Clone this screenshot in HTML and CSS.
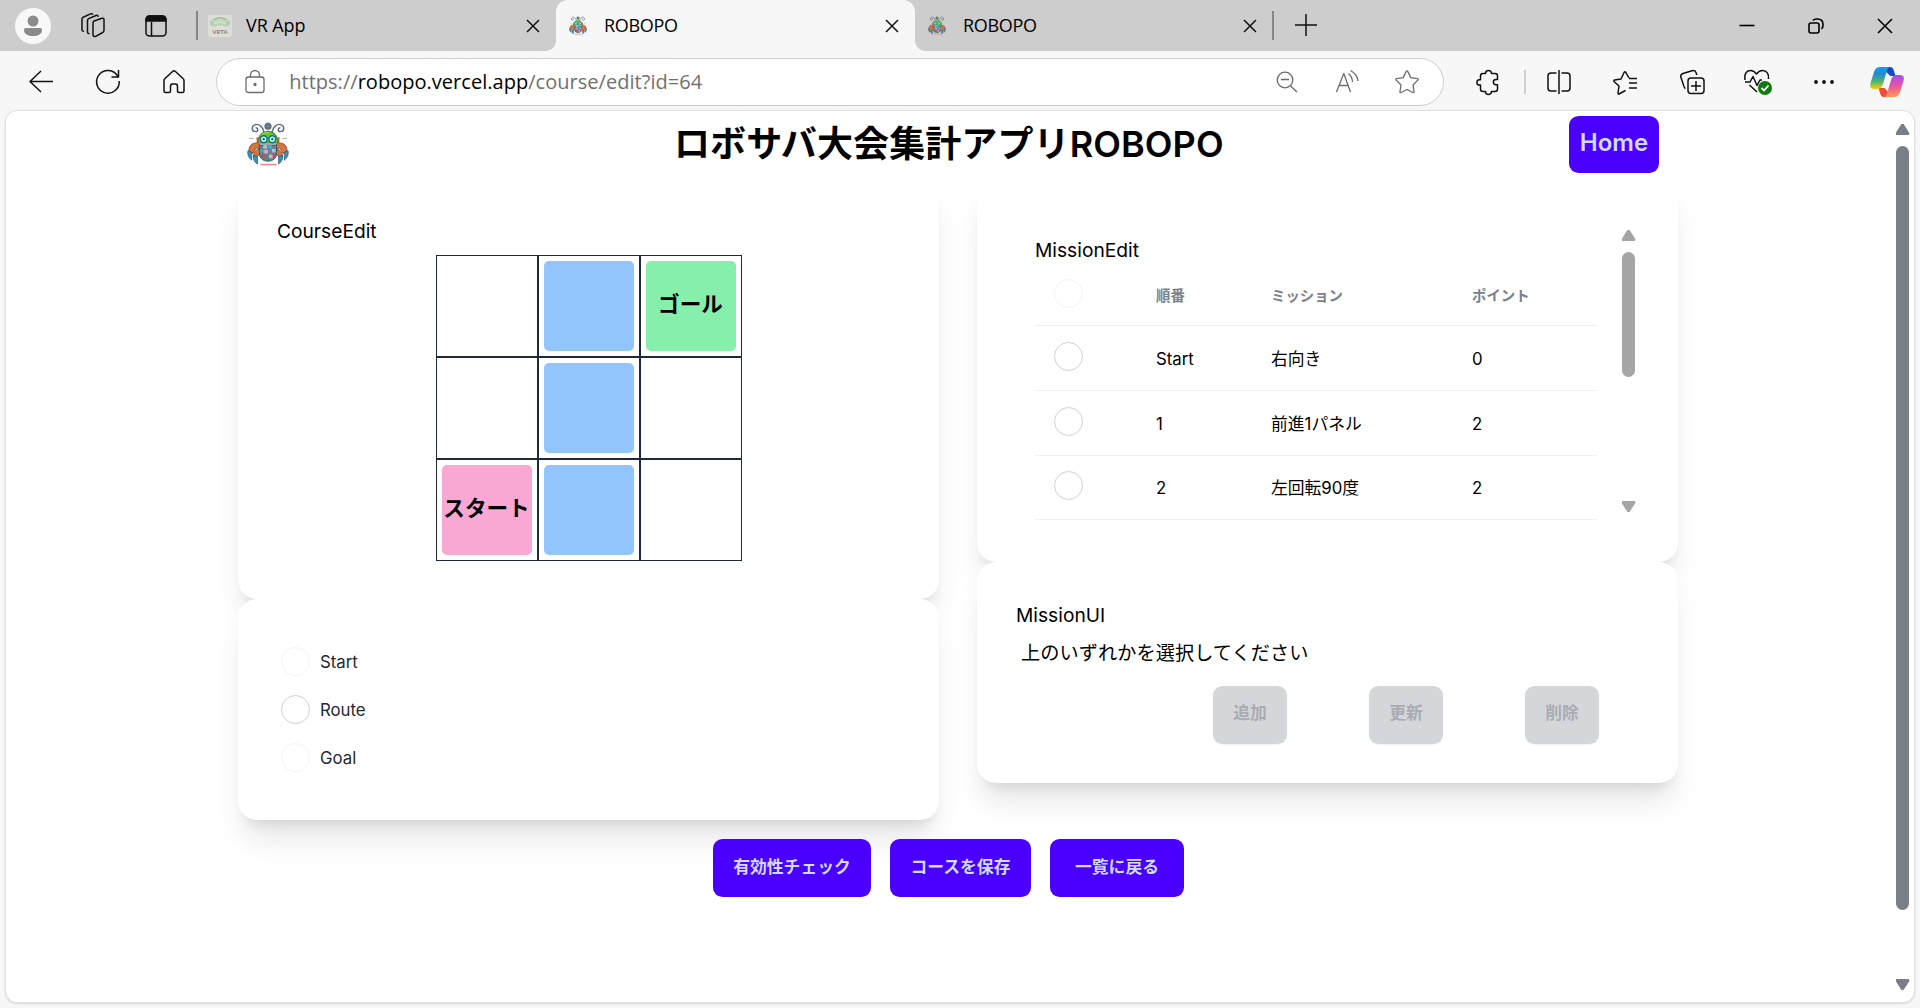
FILE: index.html
```html
<!DOCTYPE html>
<html lang="ja">
<head>
<meta charset="utf-8">
<title>ROBOPO</title>
<link rel="stylesheet" href="styles.css">
</head>
<body>
<svg class="defs" aria-hidden="true">
  <defs>
    <symbol id="close" viewBox="0 0 16 16"><path d="M2 2l12 12M14 2L2 14" fill="none" stroke="#111" stroke-width="1.5"/></symbol>
    <symbol id="robot" viewBox="0 0 44 46">
      <g fill="none" stroke="#5a6b80" stroke-width="1.5">
        <path d="M18 11C17 5 12 1 8 3c-4 2-3 7 1 7 3 0 3-4 0-4M26 11c1-6 6-10 10-8 4 2 3 7-1 7-3 0-3-4 0-4"/>
        <path d="M2 17h5M37 17h5" stroke="#b9c2cc" stroke-width="1.3"/>
      </g>
      <circle cx="22" cy="4.500" r="3.700" fill="#56667c"/><path d="M22 0v11M18 4.500h8" stroke="#8795a8" stroke-width=".8"/>
      <g fill="#d9733a" stroke="#6b4a3c" stroke-width=".8">
        <path d="M13 23C7 20 2 24 2 30l4 3 4-6 4 2zM31 23c6-3 11 1 11 7l-4 3-4-6-4 2z"/>
        <path d="M13 28c-4 1-7 5-6 9l4-1 4-5zM31 28c4 1 7 5 6 9l-4-1-4-5z"/>
      </g>
      <g fill="#3591b8" stroke="#355069" stroke-width=".7">
        <path d="M1 30l4 2 0 8C2 38 0 34 1 30zM43 30l-4 2 0 8c3-2 5-6 4-10zM7 35l4 1 0 8c-3-2-5-5-4-9zM37 35l-4 1 0 8c3-2 5-5 4-9z"/>
      </g>
      <path d="M13 24h18v9c0 5-4 8-9 8s-9-3-9-8z" fill="#62818d" stroke="#405464"/>
      <path d="M17 24h4v4h-4zM26 28h4v4h-4z" fill="#a9bfd0"/><path d="M22 24h4v4h-4zM14 29h4v3h-4z" fill="#49a9d0"/>
      <path d="M18 29h4v4h-4zM23 34h4v4h-4z" fill="#e6a4b6"/><path d="M15 34h4v3h-4zM27 33h3v4h-3z" fill="#c04e62"/><path d="M19 37h4v3h-4z" fill="#3e9a55"/>
      <path d="M12 22c-1-8 4-12 10-12s11 4 10 12z" fill="#60c72c" stroke="#39713a"/>
      <path d="M15 14c2-3 5-3 8-3" stroke="#a9ec62" fill="none"/>
      <path d="M11 16v6M33 16v6" stroke="#bc6538" stroke-width="2"/>
      <circle cx="17.500" cy="18" r="3.600" fill="#b5f3f1" stroke="#146f80" stroke-width="1.500"/><circle cx="26.500" cy="18" r="3.600" fill="#b5f3f1" stroke="#146f80" stroke-width="1.500"/>
      <circle cx="17.500" cy="18" r="1.200" fill="#16616f"/><circle cx="26.500" cy="18" r="1.200" fill="#16616f"/>
      <path d="M14 44.500h17" stroke="#f2848f" stroke-width="1.600"/>
    </symbol>
  </defs>
</svg>

<header class="tabstrip">
  <div class="strip-tools">
    <svg class="profile" viewBox="0 0 36 36"><circle cx="18" cy="18" r="18" fill="#f8f8f8"/><circle cx="18" cy="13" r="5.500" fill="#8b8b8b"/><path d="M11 20h14c1.500 0 2 .7 2 2 0 4-4 6-9 6s-9-2-9-6c0-1.300.5-2 2-2z" fill="#8b8b8b"/></svg>
    <svg class="icon stack" viewBox="0 0 26 26" ><path d="M14 8l8-2.700c1.200-.3 2 .3 2 1.300v11c0 1-.5 1.600-1.300 1.900l-7 3.800c-1.600.7-2.700 0-2.700-1.300V10c0-1 .3-1.700 1-2zM9.500 20.500c-1 .3-2-.2-2-1.500V7.500c0-1 .4-1.500 1.200-1.900L16 2.500c1-.4 2 0 2.400 1.200M4 18.300c-1 .2-2-.5-2-1.500V6.200c0-1 .4-1.600 1.200-2L10.500.9c1-.4 1.800-.2 2.500.7"/></svg>
    <svg class="icon panel" viewBox="0 0 22 22"><rect x="1" y="1" width="20" height="20" rx="3.500"/><path d="M1 6V4.500A3.500 3.500 0 0 1 4.500 1h13A3.500 3.500 0 0 1 21 4.500V6z" fill="#111"/><path d="M6.500 7v14"/></svg>
  </div>
  <div class="tab tab-first">
    <svg class="vrta" viewBox="0 0 24 22"><rect width="24" height="22" rx="2" fill="#deddd6"/><path d="M5 5q7-4 14 0" stroke="#9fc5a9" stroke-width="2" fill="none"/><path d="M2 5.500h20v4q-3 3-6 1.500-4-2-8 0-3 1.500-6-1.500z" fill="#a9cfc0"/><path d="M5 6h14l-1 4-6-1.500L6 10z" fill="#d5dda0"/><text x="12" y="18.800" text-anchor="middle" class="vrta-text">VRTA</text></svg>
    <span class="tab-title">VR App</span>
    <svg class="x"><use href="#close"/></svg>
  </div>
  <div class="tab tab-active">
    <svg class="favicon"><use href="#robot"/></svg>
    <span class="tab-title">ROBOPO</span>
    <svg class="x"><use href="#close"/></svg>
  </div>
  <div class="tab tab-last">
    <svg class="favicon"><use href="#robot"/></svg>
    <span class="tab-title">ROBOPO</span>
    <svg class="x"><use href="#close"/></svg>
  </div>
  <svg class="icon plus" viewBox="0 0 22 22"><path d="M11 0v22M0 11h22"/></svg>
  <div class="window-controls">
    <svg viewBox="0 0 16 16"><path d="M.5 7.500h15"/></svg>
    <svg viewBox="0 0 16 16"><rect x="1" y="5" width="10" height="10" rx="2"/><path d="M5 2.500Q6 1 8.500 1h1Q15 1 15 6.500v1q0 2-1.500 3.500"/></svg>
    <svg viewBox="0 0 16 16"><path d="M1 1l14 14M15 1L1 15"/></svg>
  </div>
</header>

<nav class="toolbar">
  <div class="tool"><svg class="icon" viewBox="0 0 24 24"><path d="M24 11.500H1M12 1L1 11.500 12 22"/></svg></div>
  <div class="tool"><svg class="icon" viewBox="0 0 24 24"><path d="M23.200 11A11.300 11.300 0 1 1 20.500 4.500L22 6.500M22.500 0v7h-7"/></svg></div>
  <div class="tool"><svg class="icon" viewBox="0 0 24 24"><path d="M2 10.500q0-1 .8-1.700l8-7.500q1.200-1 2.400 0l8 7.500q.8.700.8 1.700V21q0 1.500-1.500 1.500h-3Q15.500 22.500 15.500 21v-4.500q0-2.500-2-2.500h-3q-2 0-2 2.500V21q0 1.500-1.500 1.500H3.500Q2 22.500 2 21z"/></svg></div>
  <div class="address">
    <svg class="icon gray lock" viewBox="0 0 20 24"><rect x="1" y="7" width="18" height="15.500" rx="2.500"/><path d="M5.500 7V5a4.500 4.500 0 0 1 9 0v2"/><circle cx="10" cy="14.500" r="1" fill="#6b6b6b"/></svg>
    <span class="url">https://<b>robopo.vercel.app</b>/course/edit?id=64</span>
    <div class="address-tools">
      <svg class="icon gray" viewBox="0 0 24 24"><circle cx="10" cy="10" r="7.800"/><path d="M6 9.500h8M15.500 16l6.500 6"/></svg>
      <svg class="icon gray" viewBox="0 0 24 24"><path d="M1.500 22L8.800 3.500 15.500 22M4.300 15.500h9M13.500 3.500q4 3.500 4 8.500M15.500 .5q7 4 7.500 10.500"/></svg>
      <svg class="icon gray" viewBox="0 0 24 24"><path d="M12 .8q.6 0 .9.800l2.900 6 6.500 1q1.600.3.500 1.500L18 15l1 6.500q.2 1.500-1.200 1L12 19.500l-5.800 3q-1.500.5-1.200-1L6 15l-4.800-4.900Q.1 8.900 1.700 8.600l6.500-1 2.900-6q.3-.8.9-.8z"/></svg>
    </div>
  </div>
  <div class="tool ext"><svg class="icon" viewBox="0 0 24 24"><path d="M9.500 3.500a3 3 0 0 1 6 0H19q2.500 0 2.500 2.500v3.500H20a2.600 2.600 0 0 0 0 5.200h1.500V19q0 2.500-2.500 2.500h-3.500a3 3 0 0 1-6 0H7q-2.500 0-2.500-2.500v-4H3.500a2.600 2.600 0 0 1 0-5.200h1V6Q4.500 3.500 7 3.500z"/></svg></div>
  <i class="tool-rule"></i>
  <div class="tool"><svg class="icon" viewBox="0 0 24 24"><path d="M12 0v24M9.500 3H4Q1 3 1 6v12q0 3 3 3h5.500M14.500 3H20q3 0 3 3v12q0 3-3 3h-5.500"/></svg></div>
  <div class="tool"><svg class="icon" viewBox="0 0 24 24"><path d="M12.500 19.500L6 23q-1 .3-1-1l1-7-5-4.500Q.5 9.300 1.700 9L8 8l3.200-6.700q.8-1 1.600 0L16 7M16 12h8M16 7.500h8M16 17h8" transform="translate(0 1)"/></svg></div>
  <div class="tool"><svg class="icon" viewBox="0 0 24 24"><rect x="8" y="8" width="16" height="15.500" rx="3"/><path d="M16 11v10M11 16h10M5.500 18.500Q4 18 3.500 15L.8 7Q.3 4.500 3 3.500L12 .8q3-.8 4 1.700l.8 2.500"/></svg></div>
  <div class="tool"><svg class="icon heart" viewBox="0 0 28 26"><path d="M1 11C0 4 3 1.500 6.500 1.500Q10 1.500 12.500 5 15 1.500 18.500 1.500C23 1.500 25 5 24.500 10M1 13h5l3-5.500 4 9 3-5.500h2M5.500 16l7.500 7"/><circle cx="21" cy="19" r="7" fill="#0f7b10" stroke="none"/><path d="M17.500 19l2.500 2.500 4.500-5" stroke="#fff" stroke-width="1.800"/></svg></div>
  <div class="tool"><svg class="icon" viewBox="0 0 24 24"><g fill="#111" stroke="none"><circle cx="4" cy="12" r="1.900"/><circle cx="12" cy="12" r="1.900"/><circle cx="20" cy="12" r="1.900"/></g></svg></div>
  <div class="tool-copilot"><svg viewBox="0 0 34 30">
    <defs>
      <linearGradient id="ca" x1="0" y1="0" x2="0" y2="1"><stop offset="0" stop-color="#0ca5e8"/><stop offset=".3" stop-color="#2387d8"/><stop offset=".65" stop-color="#4db56f"/><stop offset="1" stop-color="#f5cf10"/></linearGradient>
      <linearGradient id="cb" x1="0" y1="0" x2="0" y2="1"><stop offset="0" stop-color="#a44cf0"/><stop offset=".5" stop-color="#e6569d"/><stop offset="1" stop-color="#ff9a50"/></linearGradient>
    </defs>
    <path d="M18 0h2q3 0 4 4l1.500 5h-5L15 4z" fill="#1748c8"/>
    <path d="M16 30h-2q-3 0-4-4l-1.500-5h6L19 26z" fill="#f04b35"/>
    <path d="M10 0h10q-2 0-3.500 5L13 17q-1.500 5-5.500 5H4Q-1 22 .5 16L4 5q1.500-5 6-5z" fill="url(#ca)"/>
    <path d="M24 30H14q2 0 3.500-5L21 13q1.500-5 5.500-5H30q5 0 3.500 6L30 25q-1.500 5-6 5z" fill="url(#cb)"/>
  </svg></div>
</nav>

<div class="viewport">
  <div class="page">
    <header class="page-head">
      <svg class="logo"><use href="#robot"/></svg>
      <h1>ロボサバ大会集計アプリROBOPO</h1>
      <button class="btn home">Home</button>
    </header>
    <main class="columns">
      <div class="column">
        <section class="card course">
          <h2>CourseEdit</h2>
          <div class="field">
            <div class="cell"></div><div class="cell"><div class="tile route"></div></div><div class="cell"><div class="tile goal">ゴール</div></div>
            <div class="cell"></div><div class="cell"><div class="tile route"></div></div><div class="cell"></div>
            <div class="cell"><div class="tile start">スタート</div></div><div class="cell"><div class="tile route"></div></div><div class="cell"></div>
          </div>
        </section>
        <section class="card modes">
          <label><i class="radio off"></i>Start</label>
          <label><i class="radio"></i>Route</label>
          <label><i class="radio off"></i>Goal</label>
        </section>
      </div>
      <div class="column">
        <section class="card mission">
          <div class="mission-body">
            <h2>MissionEdit</h2>
            <table>
              <thead><tr><th class="pick"><i class="radio off"></i></th><th class="no">順番</th><th class="what">ミッション</th><th>ポイント</th></tr></thead>
              <tbody>
                <tr><td><i class="radio"></i></td><td>Start</td><td>右向き</td><td>0</td></tr>
                <tr><td><i class="radio"></i></td><td>1</td><td>前進1パネル</td><td>2</td></tr>
                <tr class="last"><td><i class="radio"></i></td><td>2</td><td>左回転90度</td><td>2</td></tr>
              </tbody>
            </table>
          </div>
          <div class="scroll inner"><i class="up"></i><i class="thumb"></i><i class="down"></i></div>
        </section>
        <section class="card mission-ui">
          <h2>MissionUI</h2>
          <p>上のいずれかを選択してください</p>
          <div class="actions"><button class="btn disabled">追加</button><button class="btn disabled">更新</button><button class="btn disabled">削除</button></div>
        </section>
      </div>
    </main>
    <footer class="page-actions">
      <button class="btn check">有効性チェック</button><button class="btn save">コースを保存</button><button class="btn back">一覧に戻る</button>
    </footer>
  </div>
  <div class="scroll outer"><i class="up"></i><i class="thumb"></i><i class="down"></i></div>
</div>
</body>
</html>
```
FILE: styles.css
```css
* { box-sizing: border-box; }
body {
  margin: 0;
  width: 1920px;
  height: 1008px;
  overflow: hidden;
  background: #f7f7f7;
  color: #000;
  font: 19.2px/28.8px Inter, "Noto Sans CJK JP", sans-serif;
}
h1, h2, p { margin: 0; }
svg { display: block; flex: none; }
.defs { position: absolute; width: 0; height: 0; }
.icon { width: 24px; height: 24px; fill: none; stroke: #111; stroke-width: 1.5; stroke-linejoin: round; overflow: visible; }
.icon.gray { stroke: #6b6b6b; stroke-width: 1.3; }

/* Tab strip */
.tabstrip { display: flex; align-items: center; height: 51px; background: #cdcdcd; font-family: "Open Sans", sans-serif; font-size: 18px; }
.strip-tools { display: flex; align-items: center; width: 198px; height: 29px; padding-left: 15px; border-right: 2px solid #858585; }
.profile { width: 36px; height: 36px; }
.stack { margin-left: 29px; width: 26px; height: 26px; }
.panel { margin-left: 39px; width: 22px; height: 22px; }
.tab { display: flex; align-items: center; height: 51px; }
.tab-first { width: 358px; padding: 0 15px 0 10px; }
.tab-active { position: relative; width: 359px; padding: 0 15px 0 13px; background: #f7f7f7; border-radius: 12px 12px 0 0; }
.tab-active::before, .tab-active::after { content: ""; position: absolute; bottom: 0; width: 10px; height: 10px; }
.tab-active::before { left: -10px; background: radial-gradient(circle at 0 0, transparent 9.5px, #f7f7f7 10px); }
.tab-active::after { right: -10px; background: radial-gradient(circle at 100% 0, transparent 9.5px, #f7f7f7 10px); }
.tab-last { width: 359px; height: 29px; padding: 0 14px 0 13px; border-right: 2px solid #858585; }
.vrta { width: 24px; height: 22px; }
.vrta-text { font: bold 6px Lato, sans-serif; fill: #85857f; }
.favicon { width: 18px; height: 19px; }
.tab-title { flex: 1; margin-left: 17px; letter-spacing: -0.3px; }
.tab-first .tab-title { margin-left: 14px; letter-spacing: -0.1px; }
.x { width: 16px; height: 16px; }
.plus { width: 22px; height: 22px; margin: -1px 0 0 21px; }
.window-controls { display: flex; gap: 53px; margin-left: auto; padding-right: 27px; }
.window-controls svg { width: 16px; height: 16px; fill: none; stroke: #000; stroke-width: 1.6; }

/* Toolbar */
.toolbar { display: flex; align-items: center; height: 59px; padding: 2px 0 0 8px; }
.tool { display: flex; justify-content: center; width: 66.4px; flex: none; }
.address { display: flex; align-items: center; width: 1228px; height: 48px; margin-left: 9px; padding: 0 24px 0 28px; border: 1.5px solid #cfcfcf; border-radius: 24px; background: #fff; flex: none; }
.lock { width: 20px; height: 24px; }
.url { margin-left: 24px; color: #707070; font: 20px/28px "Open Sans", sans-serif; letter-spacing: 0.03px; white-space: nowrap; }
.url b { font-weight: 400; color: #000; }
.address-tools { display: flex; gap: 36px; margin-left: auto; }
.ext { margin-left: 11px; }
.tool-rule { width: 2px; height: 24px; margin-left: 2px; background: #cfcfcf; flex: none; }
.heart { width: 28px; height: 26px; }
.tool-copilot { display: flex; justify-content: center; width: 58px; }
.tool-copilot svg { width: 34px; height: 30px; }

/* Page frame */
.viewport { display: flex; width: 1910px; height: 893px; margin: 0 0 0 5px; border: 1px solid #e2e2e2; border-radius: 12px; background: #fff; box-shadow: 0 1px 2px #d8d8d8; }
.page { flex: 1; padding: 5px 0 0 232px; }
.page-head { display: flex; align-items: flex-start; width: 1421px; height: 62px; }
.logo { width: 42px; height: 44px; margin: 6px 0 0 9px; }
h1 { width: 550px; margin: 7px 0 0 385px; font-size: 36px; line-height: 43px; font-weight: 600; letter-spacing: 0.1px; white-space: nowrap; }
.btn { border: 0; border-radius: 9.6px; background: #4900ff; color: #d1dbff; font: 600 16.8px/17px Inter, "Noto Sans CJK JP", sans-serif; padding: 0 0 2px; height: 58px; white-space: nowrap; }
.home { width: 90px; margin-left: auto; padding-bottom: 4px; font-size: 24px; height: 57px; }
.columns { display: flex; gap: 38px; width: 1440px; }
.column { width: 701px; }
.card { border-radius: 19.2px; background: #fff; box-shadow: 0 24px 30px -6px rgba(0,0,0,.1), 0 9.6px 12px -7.2px rgba(0,0,0,.1); }
h2 { font-size: 19.2px; line-height: 28.8px; font-weight: 400; }
.course { height: 421px; padding: 39px 38px 0; }
.course h2 { padding-left: 1px; }
.field { display: grid; grid-template-columns: repeat(3, 102px); width: 306px; margin: 9px auto 0; }
.cell { height: 102px; padding: 5px; border: 1px solid #1f2937; }
.tile { height: 90px; border-radius: 5px; text-align: center; font-size: 21.6px; line-height: 86px; font-weight: 600; white-space: nowrap; }
.route { background: #93c5fd; }
.goal { background: #86efac; }
.start { background: #f9a8d4; }
.modes { height: 221px; padding: 39px 43px; }
.modes label { display: flex; align-items: center; gap: 10px; height: 48px; color: #1f2937; font-size: 16.8px; }
.modes .radio { margin-top: -2px; }
.radio { display: block; width: 29px; height: 29px; border: 1px solid #cfd0d2; border-radius: 50%; flex: none; }
.radio.off { border-color: #f3f3f3; }
.mission { display: flex; height: 384px; padding: 51px 42px 0 58px; justify-content: space-between; }
.mission-body { width: 563px; padding-top: 7px; }
table { width: 562px; table-layout: fixed; border-collapse: collapse; text-align: left; font-size: 16.8px; line-height: 24px; }
th, td { height: 65px; padding: 2px 0 0; border-bottom: 1px solid #efefef; }
th { height: 61px; padding: 2px 0 0; color: #7b808a; font-size: 14.4px; font-weight: 600; }
.last td { height: 64px; padding-top: 1px; }
.pick { width: 121px; }
.no { width: 115px; }
.what { width: 201px; }
table .radio { margin: -6px 0 0 19px; }
.mission-ui { height: 221px; padding: 39px; }
.mission-ui p { margin: 9px 0 0 5px; letter-spacing: 0.05px; }
.actions { display: flex; gap: 82px; margin: 18px 0 0 197px; }
.disabled { width: 74px; background: #d5d6d9; color: #a9acb2; box-shadow: 0 1px 2px rgba(0,0,0,.06); }
.page-actions { display: flex; gap: 19px; margin: 19px 0 0 475px; position: relative; }
.check { width: 158px; }
.save { width: 141px; }
.back { width: 134px; }

/* Scroll bars */
.scroll { display: flex; flex-direction: column; align-items: center; width: 15px; flex: none; color: #7a7f87; }
.scroll .thumb { width: 13px; border-radius: 7px; background: currentColor; flex: none; }
.up, .down { width: 14px; height: 11px; background: currentColor; flex: none; }
.up { clip-path: polygon(42% 0, 58% 0, 100% 85%, 95% 100%, 5% 100%, 0 85%); }
.down { clip-path: polygon(5% 0, 95% 0, 100% 15%, 58% 100%, 42% 100%, 0 15%); margin-top: auto; }
.outer { margin-right: 4px; padding: 13px 0 12px; }
.outer .thumb { height: 764px; margin-top: 11px; }
.inner { height: 283px; color: #a5a5a5; }
.inner .up { margin-top: 1px; }
.inner .thumb { height: 125px; margin-top: 11px; }
```
